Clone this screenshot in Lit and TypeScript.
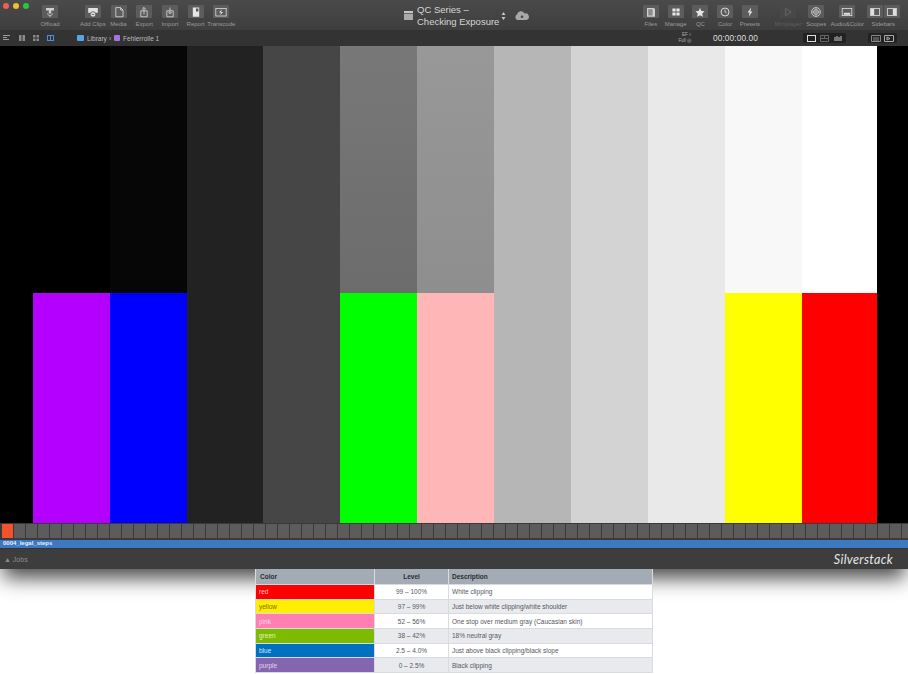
import { LitElement, html, css, svg } from "lit";
import { customElement } from "lit/decorators.js";

const I: Record<string, any> = {
  offload: svg`<path d="M6 3h10v3H12.500v4H9.500V6H6z" fill="#cfcfcf"/><path d="M8 9.500a3 3 0 0 0 6 0M11 12.500v2" stroke="#cfcfcf" fill="none"/>`,
  add: svg`<rect x="5" y="3" width="12" height="6" fill="#e2e2e2"/><circle cx="11" cy="11" r="3.400" fill="#e2e2e2" stroke="#555"/><path d="M9.400 11h3.200" stroke="#555"/>`,
  media: svg`<path d="M7 2.500h6l3 3v8.500H7z" fill="none" stroke="#dcdcdc"/><path d="M13 2.500v3h3" fill="none" stroke="#dcdcdc"/>`,
  export: svg`<path d="M7 6.500h8v7.500H7z" fill="none" stroke="#dcdcdc"/><path d="M11 11V2.500M8.800 4.500 11 2.300l2.200 2.200" fill="none" stroke="#dcdcdc"/>`,
  import: svg`<path d="M7 6.500h8v7.500H7z" fill="none" stroke="#dcdcdc"/><path d="M11 2.500V10M8.800 8 11 10.200 13.200 8" fill="none" stroke="#dcdcdc"/>`,
  report: svg`<path d="M7 2.500h8v11.500H7z" fill="#e6e6e6"/><path d="M11 3.500h3v4h-3z" fill="#555"/>`,
  transcode: svg`<rect x="4.500" y="3.500" width="13" height="9.500" fill="none" stroke="#dcdcdc"/><path d="M12 4.500 8.500 8.500h2.500L10 12l3.500-4H11z" fill="#e6e6e6"/>`,
  files: svg`<path d="M6 3h8l2 1v10H6z" fill="#cfcfcf"/><path d="M7.500 4.500h5.500v8H7.500z" fill="#8a8a8a"/>`,
  manage: svg`<path d="M6.500 3.500h4v4h-4zM11.500 3.500h4v4h-4zM6.500 8.500h4v4h-4zM11.500 8.500h4v4h-4z" fill="#e6e6e6"/>`,
  qc: svg`<path d="m11 3 1.800 3.700 4 .5-3 2.700.8 4L11 12l-3.600 1.900.8-4-3-2.700 4-.5z" fill="#e6e6e6"/>`,
  color: svg`<circle cx="11" cy="8" r="5" fill="none" stroke="#dcdcdc" stroke-width="1.200"/><path d="M11 5v3l2 1" fill="none" stroke="#dcdcdc"/>`,
  presets: svg`<path d="M12.500 2.500 8 8.500h2.500L9.500 13.500l4.500-6h-2.500z" fill="#e6e6e6"/>`,
  mini: svg`<path d="M8 3.500v9l7-4.500z" fill="none" stroke="#6c6c6c"/>`,
  scopes: svg`<circle cx="11" cy="8" r="5.500" fill="none" stroke="#dcdcdc"/><circle cx="11" cy="8" r="3" fill="none" stroke="#dcdcdc"/><path d="M11 2.500v11M5.500 8h11" stroke="#dcdcdc" stroke-width=".7"/>`,
  audio: svg`<rect x="5" y="3.500" width="12" height="9" fill="none" stroke="#e0e0e0"/><rect x="7" y="9" width="8" height="2.500" fill="#e0e0e0"/>`,
  sbl: svg`<rect x="4.500" y="3.500" width="11" height="9" fill="none" stroke="#e0e0e0"/><rect x="5" y="4" width="4" height="8" fill="#e0e0e0"/>`,
  sbr: svg`<rect x="4.500" y="3.500" width="11" height="9" fill="none" stroke="#e0e0e0"/><rect x="11" y="4" width="4" height="8" fill="#e0e0e0"/>`,
};
const icon = (k: string, w = 22) => html`<svg width=${w} height="16" viewBox="0 0 ${w} 16">${I[k]}</svg>`;

const tool = (k: string, label: string, cls = "") => html`<div class="tool ${cls}"><span class="ib">${icon(k)}</span><span class="lb">${label}</span></div>`;

const BARS = [
  { w: 33, t: "#000000", b: "#000000" },
  { w: 77, t: "#000000", b: "#b400ff" },
  { w: 77, t: "#060606", b: "#0000ff" },
  { w: 76, t: "#222222", b: "#222222" },
  { w: 77, t: "#464646", b: "#464646" },
  { w: 77, t: "linear-gradient(#787878,#6c6c6c)", b: "#00ff00" },
  { w: 77, t: "linear-gradient(#989898,#8e8e8e)", b: "#ffb6b6" },
  { w: 77, t: "#b6b6b6", b: "#b6b6b6" },
  { w: 77, t: "#d3d3d3", b: "#d3d3d3" },
  { w: 77, t: "#e9e9e9", b: "#e9e9e9" },
  { w: 77, t: "#f8f8f8", b: "#ffff00" },
  { w: 75, t: "#ffffff", b: "#ff0000" },
  { w: 31, t: "#000000", b: "#000000" },
];
const ROWS = [
  ["red", "#ff0000", "99 – 100%", "White clipping", "#fbd0d0"],
  ["yellow", "#ffee00", "97 – 99%", "Just below white clipping/white shoulder", "#7a7000"],
  ["pink", "#ff80b0", "52 – 56%", "One stop over medium gray (Caucasian skin)", "#ffd8e6"],
  ["green", "#7dbb00", "38 – 42%", "18% neutral gray", "#e2f2c0"],
  ["blue", "#0070c0", "2.5 – 4.0%", "Just above black clipping/black slope", "#cfe6f7"],
  ["purple", "#8564b0", "0 – 2.5%", "Black clipping", "#e0d6ee"],
];

@customElement("app-root")
export class AppRoot extends LitElement {
  static styles = css`
    :host { display: block; width: 908px; height: 674px; overflow: hidden; background: #fff; font-family: "Liberation Sans", Arial, sans-serif; }
    .win { height: 569px; display: flex; flex-direction: column; border-radius: 0 0 5px 5px; background: #3c3c3c; box-shadow: 0 12px 20px -3px rgba(0,0,0,.72); position: relative; }
    .top { height: 30px; display: flex; background: linear-gradient(#4a4a4a, #3e3e3e); flex: none; }
    .left { display: flex; padding-left: 35px; width: 400px; box-sizing: border-box; position: relative; }
    .lights { position: absolute; left: 3px; top: 3px; display: flex; gap: 4px; }
    .lights i { width: 6px; height: 6px; border-radius: 50%; }
    .tool { width: 25.700px; display: flex; flex-direction: column; align-items: center; padding-top: 5px; flex: none; }
    .tool.off { width: 30px; margin-right: 15px; }
    .ib { width: 16px; height: 13px; background: #5c5c5c; border-radius: 1px; display: flex; justify-content: center; align-items: center; overflow: hidden; }
    .ib svg { flex: none; transform: scale(.8); }
    .lb { font-size: 6px; color: #9a9a9a; margin-top: 2.500px; white-space: nowrap; line-height: 7px; }
    .mid { display: flex; align-items: center; width: 236px; flex: none; padding: 1px 0 0 4px; box-sizing: border-box; }
    .doc { width: 9px; height: 9px; background: #aaa; margin-right: 4px; flex: none; border-top: 2px solid #c4c4c4; box-sizing: border-box; box-shadow: inset 0 1px #666; }
    .title { font-size: 9.500px; line-height: 12px; color: #d6d6d6; white-space: nowrap; }
    .sort { margin-left: 2px; }
    .right { display: flex; padding-left: 2.500px; }
    .right .tool { width: 24.750px; }
    .right .tool.mini { width: 26px; margin-left: 13px; }
    .mini .ib { background: #484848; }
    .mini .lb { color: #5f5f5f; }
    .right .tool.sc { width: 30px; margin-left: 0; }
    .right .tool.ac { width: 32px; }
    .right .tool.sb { width: 32px; margin-left: 4px; }
    .sb .pair { display: flex; gap: 1px; }
    .sec { height: 16px; flex: none; background: #333333; display: flex; align-items: center; position: relative; }
    .views { display: flex; gap: 8px; padding-left: 3px; align-items: center; width: 77px; box-sizing: border-box; flex: none; }
    .crumb { display: flex; align-items: center; font-size: 6.500px; color: #bdbdbd; gap: 2px; width: 600px; flex: none; }
    .crumb i { width: 7px; height: 6px; border-radius: 1px; }
    .ep { font-size: 4.500px; line-height: 6px; color: #b0b0b0; text-align: right; width: 14px; flex: none; }
    .tc { font-size: 8.300px; color: #dedede; width: 62px; flex: none; margin-left: 22px; margin-right: 28px; letter-spacing: .1px; }
    .seg { display: flex; background: #222; border-radius: 2px; height: 10px; width: 43px; flex: none; align-items: center; justify-content: space-around; padding: 0 2px; box-sizing: border-box; }
    .seg2 { width: 29px; margin-left: 22px; }
    .video { height: 477px; flex: none; display: flex; background: #000; }
    .bar { display: flex; flex-direction: column; flex: none; }
    .bar .t { height: 247px; flex: none; }
    .bar .b { flex: 1; }
    .strip { height: 17px; flex: none; display: flex; gap: 1px; padding: 1px 0 2px 2px; box-sizing: border-box; background: #3a3a3a; overflow: hidden; }
    .strip i { width: 11px; flex: none; background: #5c5c5c; }
    .strip i:first-child { background: #f4512e; }
    .clip { height: 8px; flex: none; background: #3d78c2; color: #e8f0fa; font-size: 6px; font-weight: bold; line-height: 7.500px; padding-left: 3px; }
    .foot { flex: 1; display: flex; justify-content: space-between; align-items: center; background: #3d3d3d; border-top: 1px solid #333; padding: 0 15px 0 4px; }
    .jobs { font-size: 7px; color: #8c8c8c; }
    .brand { font-family: Lato, sans-serif; font-style: italic; font-size: 12.500px; letter-spacing: .35px; color: #e8e8e8; }
    .tbl { display: grid; grid-template-columns: 118px 73px 1fr; grid-template-rows: 15px repeat(6, 13.7px); gap: 1px; padding: 0 1px 1px; width: 398px; box-sizing: border-box; margin-left: 255px; position: relative; background: #d9dbe0; font-size: 6.500px; color: #55585e; }
    .tbl > div { padding-left: 3px; background: #fff; display: flex; align-items: center; white-space: nowrap; overflow: hidden; }
    .tbl > .h { background: #a3abb4; color: #2a2d33; font-weight: bold; }
    .tbl > .hc { padding-left: 4px; }
    .tbl > .m { justify-content: center; padding-left: 0; }
    .tbl > .alt { background: #e9eaee; }
  `;
  render() {
    const cells = Array.from({ length: 76 });
    return html`
      <div class="win">
        <div class="top">
          <div class="left">
            <div class="lights"><i style="background:#ee5f57"></i><i style="background:#f5bd2f"></i><i style="background:#29c640"></i></div>
            ${tool("offload", "Offload", "off")}
            ${tool("add", "Add Clips")}${tool("media", "Media")}${tool("export", "Export")}${tool("import", "Import")}${tool("report", "Report")}${tool("transcode", "Transcode")}
          </div>
          <div class="mid">
            <span class="doc"></span>
            <div class="title">QC Series –<br />Checking Exposure</div>
            <svg class="sort" width="5" height="10" viewBox="0 0 5 10"><path d="M2.500 1 4.500 4H.5zM2.500 9 .5 6h4z" fill="#c4c4c4"/></svg>
            <svg style="margin-left:8px" width="16" height="10" viewBox="0 0 16 10"><path d="M3.500 9a3 3 0 0 1-.5-5.500 4 4 0 0 1 7.500-1 3.300 3.300 0 0 1 2 6.500z" fill="#a8a8a8"/><circle cx="8" cy="5.800" r="1.300" fill="#444"/></svg>
          </div>
          <div class="right">
            ${tool("files", "Files")}${tool("manage", "Manage")}${tool("qc", "QC")}${tool("color", "Color")}${tool("presets", "Presets")}
            ${tool("mini", "Miniplayer", "mini")}${tool("scopes", "Scopes", "sc")}${tool("audio", "Audio&Color", "ac")}
            <div class="tool sb"><div class="pair"><span class="ib">${icon("sbl", 20)}</span><span class="ib">${icon("sbr", 20)}</span></div><span class="lb">Sidebars</span></div>
          </div>
        </div>
        <div class="sec">
          <div class="views">
            <svg width="8" height="6" viewBox="0 0 8 6"><path d="M0 .5h7M0 2.500h4M0 4.500h6" stroke="#9a9a9a"/></svg>
            <svg width="6" height="6" viewBox="0 0 6 6"><path d="M0 0h2.500v6H0zM3.500 0H6v6H3.500z" fill="#8a8a8a"/></svg>
            <svg width="6" height="6" viewBox="0 0 6 6"><path d="M0 0h2.500v2.500H0zM3.500 0H6v2.500H3.500zM0 3.500h2.500V6H0zM3.500 3.500H6V6H3.500z" fill="#8a8a8a"/></svg>
            <svg width="7" height="6" viewBox="0 0 7 6"><rect x=".5" y=".5" width="6" height="5" fill="none" stroke="#4a8fd8"/><path d="M3.500 1v4" stroke="#4a8fd8"/></svg>
          </div>
          <div class="crumb"><i style="background:#58a6e0"></i><span style="margin-left:1px">Library</span><span>›</span><i style="background:#a873e0;width:6px;margin-left:1px"></i><span style="margin-left:1px">Fehlerrolle 1</span></div>
          <div class="ep">EF ⁝⁝<br />Full ◎</div>
          <div class="tc">00:00:00.00</div>
          <div class="seg">
            <svg width="9" height="7" viewBox="0 0 9 7"><rect x=".5" y=".5" width="8" height="6" fill="none" stroke="#ddd"/></svg>
            <svg width="9" height="7" viewBox="0 0 9 7"><path d="M.5.5h8v6h-8zM.5 3.500h8M4.500.5v3" fill="none" stroke="#666"/></svg>
            <svg width="8" height="7" viewBox="0 0 8 7"><path d="M1 6V2M3 6V1M5 6V2M7 6V1" stroke="#ccc"/></svg>
          </div>
          <div class="seg seg2">
            <svg width="10" height="7" viewBox="0 0 10 7"><path d="M.5.5h9v6h-9zM2 3h6M2 5h6" fill="none" stroke="#888"/></svg>
            <svg width="10" height="7" viewBox="0 0 10 7"><path d="M.5.5h9v6h-9zM3 2l3 1.500L3 5z" fill="none" stroke="#aaa"/></svg>
          </div>
        </div>
        <div class="video">
          ${BARS.map(b => html`<div class="bar" style="width:${b.w}px"><div class="t" style="background:${b.t}"></div><div class="b" style="background:${b.b}"></div></div>`)}
        </div>
        <div class="strip">${cells.map(() => html`<i></i>`)}</div>
        <div class="clip">0004_legal_steps</div>
        <div class="foot"><span class="jobs">▲ Jobs</span><span class="brand">Silverstack</span></div>
      </div>
      <div class="tbl">
        <div class="h hc">Color</div><div class="h m">Level</div><div class="h">Description</div>
        ${ROWS.map((r, i) => html`
          <div style="background:${r[1]};color:${r[4]}">${r[0]}</div>
          <div class="m ${i % 2 ? "alt" : ""}">${r[2]}</div>
          <div class=${i % 2 ? "alt" : ""}>${r[3]}</div>`)}
      </div>
    `;
  }
}
